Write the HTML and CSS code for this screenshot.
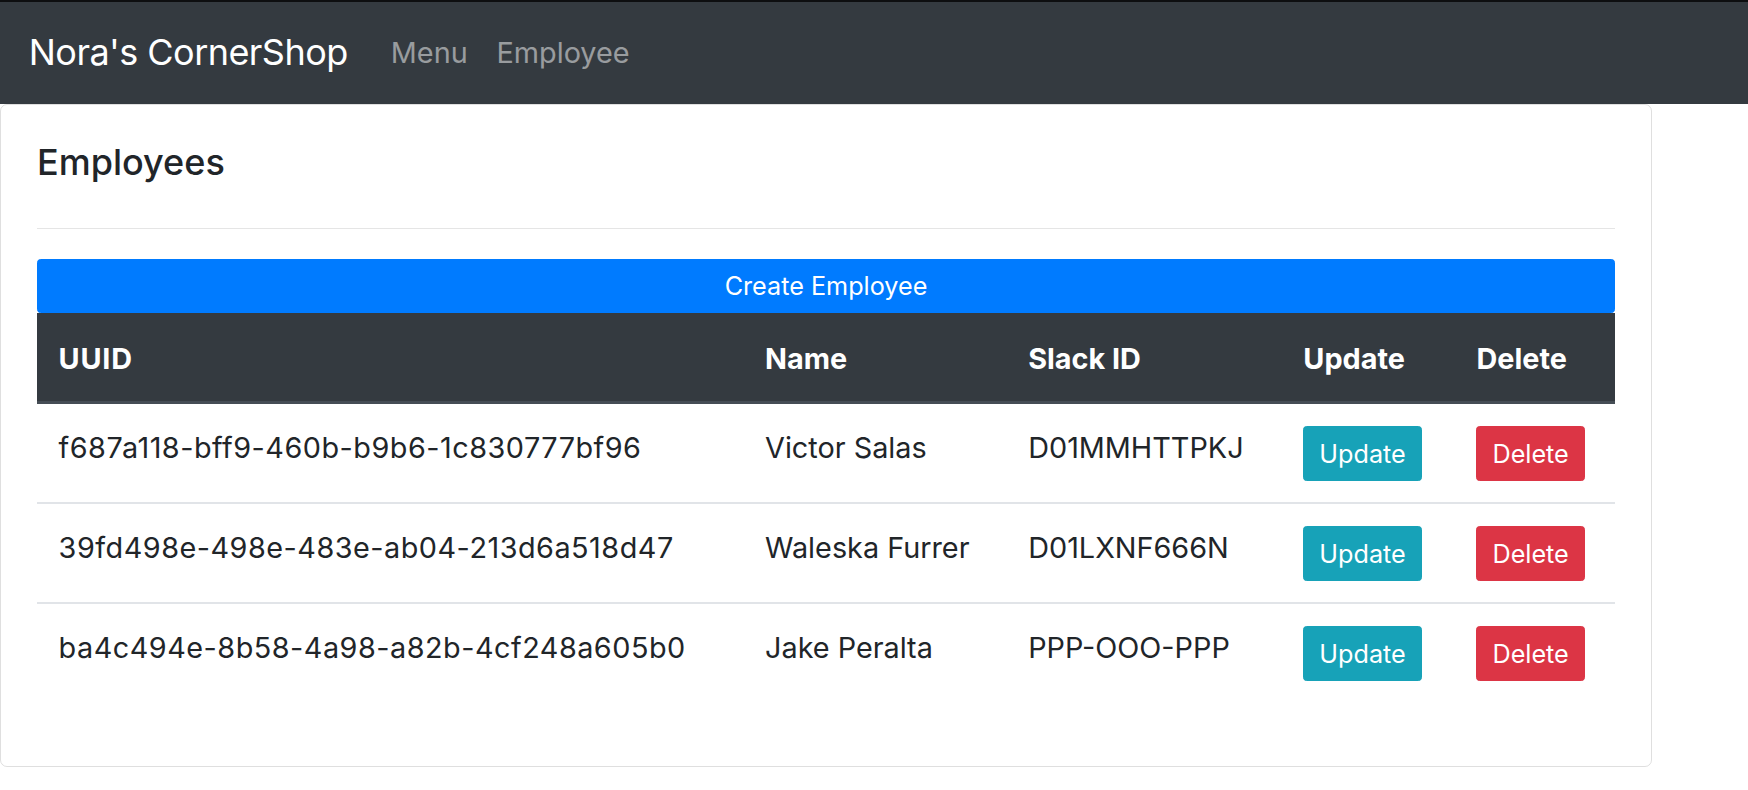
FILE: index.html
```html
<!DOCTYPE html>
<html lang="en">
<head>
<meta charset="utf-8">
<title>Nora's CornerShop</title>
<link rel="stylesheet" href="styles.css">
</head>
<body>
<nav class="navbar">
  <a class="brand" href="#">Nora's CornerShop</a>
  <a class="nav-link" href="#">Menu</a>
  <a class="nav-link" href="#">Employee</a>
</nav>
<main class="card">
  <h5 class="card-title">Employees</h5>
  <hr class="divider">
  <button class="btn btn-sm btn-primary btn-block">Create Employee</button>
  <table class="table">
    <colgroup>
      <col class="c-uuid"><col class="c-name"><col class="c-slack"><col class="c-upd"><col class="c-del">
    </colgroup>
    <thead>
      <tr><th class="th-uuid">UUID</th><th>Name</th><th>Slack ID</th><th>Update</th><th>Delete</th></tr>
    </thead>
    <tbody>
      <tr>
        <td class="uuid">f687a118-bff9-460b-b9b6-1c830777bf96</td><td>Victor Salas</td><td>D01MMHTTPKJ</td>
        <td><button class="btn btn-sm btn-info">Update</button></td>
        <td><button class="btn btn-sm btn-danger">Delete</button></td>
      </tr>
      <tr>
        <td class="uuid">39fd498e-498e-483e-ab04-213d6a518d47</td><td>Waleska Furrer</td><td>D01LXNF666N</td>
        <td><button class="btn btn-sm btn-info">Update</button></td>
        <td><button class="btn btn-sm btn-danger">Delete</button></td>
      </tr>
      <tr>
        <td class="uuid">ba4c494e-8b58-4a98-a82b-4cf248a605b0</td><td>Jake Peralta</td><td>PPP-OOO-PPP</td>
        <td><button class="btn btn-sm btn-info">Update</button></td>
        <td><button class="btn btn-sm btn-danger">Delete</button></td>
      </tr>
    </tbody>
  </table>
</main>
</body>
</html>
```
FILE: styles.css
```css
* { box-sizing: border-box; }
html, body { margin: 0; padding: 0; background: #fff; }
body {
  font-family: Inter, "Noto Sans", "Liberation Sans", sans-serif;
  font-size: 28.8px;
  line-height: 43.2px;
  color: #212529;
}
.navbar {
  display: flex;
  align-items: center;
  height: 104px;
  padding: 0 28.8px;
  background: #343a40;
  border-top: 2px solid #0d0e10;
}
.brand {
  font-size: 36px;
  color: #fff;
  text-decoration: none;
  margin-right: 28.8px;
  letter-spacing: -0.55px;
}
.nav-link {
  padding: 0 14.4px;
  font-size: 28.8px;
  color: rgba(255,255,255,.5);
  text-decoration: none;
}
.card {
  display: block;
  width: 1652px;
  border: 1px solid rgba(0,0,0,.125);
  border-radius: 7px;
  padding: 36px 36px 35px;
}
.card-title {
  margin: 0;
  font-size: 36px;
  line-height: 43px;
  font-weight: 500;
}
.divider {
  margin: 44px 0 30px;
  border: 0;
  border-top: 1px solid rgba(0,0,0,.1);
  height: 0;
}
.btn {
  display: inline-block;
  font-family: inherit;
  font-weight: 400;
  color: #fff;
  border: 1px solid transparent;
  cursor: pointer;
}
.btn-sm {
  font-size: 25.2px;
  line-height: 38px;
  padding: 7.5px 15px;
  border-radius: 3.6px;
}
.btn-block { display: block; width: 100%; padding-top: 7px; padding-bottom: 7px; }
.btn-primary { background: #007bff; border-color: #007bff; }
.btn-info { background: #17a2b8; border-color: #17a2b8; }
.btn-danger { background: #dc3545; border-color: #dc3545; }
.table {
  width: 100%;
  table-layout: fixed;
  border-collapse: separate;
  border-spacing: 0;
  margin-bottom: 29px;
}
.c-uuid { width: 706px; }
.c-name { width: 263px; }
.c-slack { width: 275px; }
.c-upd { width: 173px; }
.c-del { width: 160px; }
.table th {
  background: #343a40;
  color: #fff;
  font-weight: 700;
  text-align: left;
  vertical-align: bottom;
  padding: 24px 21.6px 21px;
  border-bottom: 3px solid #454d55;
  white-space: nowrap;
}
.table th.th-uuid { letter-spacing: 0.8px; }
.table td {
  vertical-align: top;
  padding: 22px 21.6px 21px;
  border-top: 2px solid #e1e4e8;
  white-space: nowrap;
}
.table td.uuid { letter-spacing: 0.5px; }
.table tbody tr:first-child td { border-top: 0; }
```
